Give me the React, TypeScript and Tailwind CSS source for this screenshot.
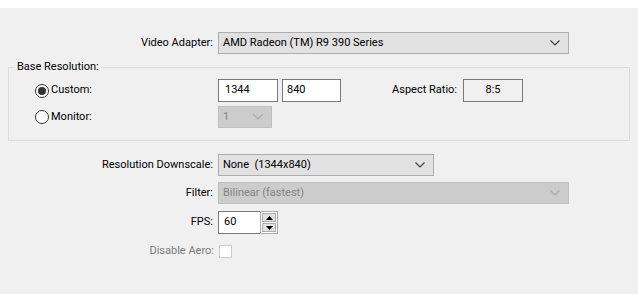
import React from 'react';

const Chevron: React.FC<{ disabled?: boolean }> = ({ disabled }) => (
  <svg width="10" height="6" viewBox="0 0 10 6" className="shrink-0">
    <path d="M0.5 0.5 L5 5 L9.5 0.5" fill="none" stroke={disabled ? '#a8a8a8' : '#404040'} strokeWidth="1.2" />
  </svg>
);

const Combo: React.FC<{ value: string; width: string; disabled?: boolean }> = ({ value, width, disabled }) => (
  <div
    className={`${width} h-[22px] flex items-center justify-between pl-[4px] pr-[8px] border ${
      disabled ? 'bg-[#cccccc] border-[#bfbfbf] text-[#838383]' : 'bg-[#e1e1e1] border-[#adadad] text-black'
    }`}
  >
    <span className="whitespace-pre">{value}</span>
    <Chevron disabled={disabled} />
  </div>
);

const Label: React.FC<{ text: string; width: string; muted?: boolean }> = ({ text, width, muted }) => (
  <div className={`${width} shrink-0 text-right pr-[5px] ${muted ? 'text-[#7a7a7a]' : 'text-black'}`}>{text}</div>
);

const Radio: React.FC<{ checked?: boolean; label: string }> = ({ checked, label }) => (
  <div className="flex items-center gap-[2px]">
    <div className="w-[14px] h-[14px] rounded-full border border-[#333333] bg-white flex items-center justify-center">
      {checked && <div className="w-[8px] h-[8px] rounded-full bg-[#333333]" />}
    </div>
    <span>{label}</span>
  </div>
);

export default function App() {
  return (
    <div
      className="w-[638px] h-[294px] bg-[#f0f0f0] text-[11px] text-black overflow-hidden"
      style={{ fontFamily: 'Roboto, "Liberation Sans", Arial, sans-serif' }}
    >
      <div className="h-[8px] bg-white" />

      {/* Video adapter */}
      <div className="flex items-center mt-[24px]">
        <Label text="Video Adapter:" width="w-[218px]" />
        <Combo value="AMD Radeon (TM) R9 390 Series" width="w-[351px]" />
      </div>

      {/* Base resolution group */}
      <div className="relative mx-[8px] mt-[13px] h-[74px] border border-[#dcdcdc]">
        <span className="absolute left-[6px] -top-[9px] px-[2px] bg-[#f0f0f0]">Base Resolution:</span>
        <div className="flex items-center mt-[11px]">
          <div className="w-[209px] shrink-0 pl-[26px]">
            <Radio checked label="Custom:" />
          </div>
          <div className="w-[60px] h-[23px] border border-[#7a7a7a] bg-white flex items-center pl-[6px]">1344</div>
          <div className="w-[59px] h-[23px] ml-[4px] border border-[#7a7a7a] bg-white flex items-center pl-[4px]">840</div>
          <div className="w-[122px] shrink-0 text-right pr-[6px]">Aspect Ratio:</div>
          <div className="w-[60px] h-[23px] border border-[#7a7a7a] bg-[#f0f0f0] flex items-center justify-center">
            8:5
          </div>
        </div>
        <div className="flex items-center mt-[4px]">
          <div className="w-[209px] shrink-0 pl-[26px]">
            <Radio label="Monitor:" />
          </div>
          <Combo value="1" width="w-[54px]" disabled />
        </div>
      </div>

      {/* Downscale */}
      <div className="flex items-center mt-[13px]">
        <Label text="Resolution Downscale:" width="w-[218px]" />
        <Combo value="None  (1344x840)" width="w-[216px]" />
      </div>
      <div className="flex items-center mt-[6px]">
        <Label text="Filter:" width="w-[218px]" />
        <Combo value="Bilinear (fastest)" width="w-[351px]" disabled />
      </div>

      {/* FPS */}
      <div className="flex items-center mt-[7px]">
        <Label text="FPS:" width="w-[218px]" />
        <div className="w-[42px] h-[23px] border border-[#7a7a7a] border-r-0 bg-white flex items-center pl-[5px]">60</div>
        <div className="w-[18px] h-[23px] border border-[#adadad] bg-white flex flex-col gap-px p-px">
          <div className="flex-1 bg-[#e1e1e1] border border-[#adadad] flex items-center justify-center">
            <svg width="7" height="4" viewBox="0 0 7 4">
              <path d="M0 4 L3.5 0 L7 4 Z" fill="#000" />
            </svg>
          </div>
          <div className="flex-1 bg-[#e1e1e1] border border-[#adadad] flex items-center justify-center">
            <svg width="7" height="4" viewBox="0 0 7 4">
              <path d="M0 0 L3.5 4 L7 0 Z" fill="#000" />
            </svg>
          </div>
        </div>
      </div>

      {/* Disable Aero */}
      <div className="flex items-center mt-[9px]">
        <Label text="Disable Aero:" width="w-[219px]" muted />
        <div className="w-[13px] h-[13px] border border-[#cccccc] bg-white" />
      </div>
    </div>
  );
}
